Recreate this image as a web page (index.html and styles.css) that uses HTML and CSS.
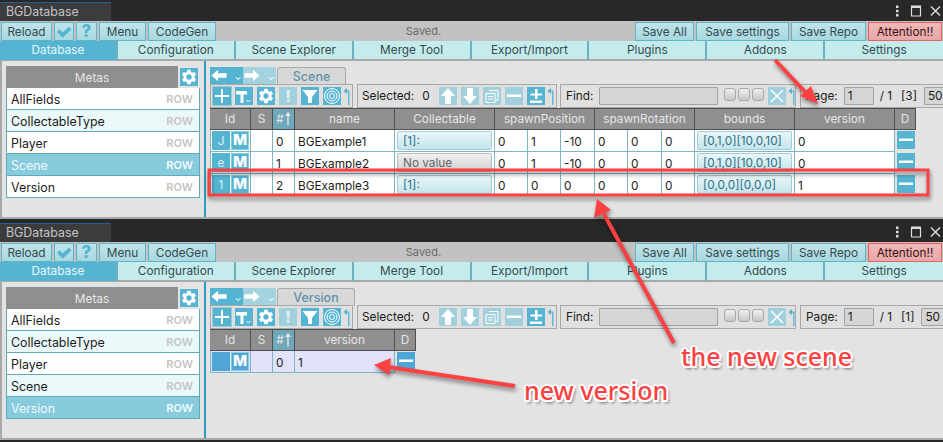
FILE: index.html
```html
<!DOCTYPE html>
<html lang="en">
<head>
  <meta charset="UTF-8">
  <title>BGDatabase</title>
  <link rel="stylesheet" href="styles.css">
</head>
<body>

  <!-- shared icons -->
  <svg class="defs" xmlns="http://www.w3.org/2000/svg">
    <symbol id="i-gear" viewBox="0 0 24 24"><path d="M19.14 12.94c.04-.3.06-.61.06-.94 0-.32-.02-.64-.07-.94l2.03-1.58a.49.49 0 0 0 .12-.61l-1.92-3.32a.488.488 0 0 0-.59-.22l-2.39.96c-.5-.38-1.03-.7-1.62-.94l-.36-2.54a.484.484 0 0 0-.48-.41h-3.84c-.24 0-.43.17-.47.41l-.36 2.54c-.59.24-1.13.57-1.62.94l-2.39-.96c-.22-.08-.47 0-.59.22L2.74 8.87c-.12.21-.08.47.12.61l2.03 1.58c-.05.3-.09.63-.09.94s.02.64.07.94l-2.03 1.58a.49.49 0 0 0-.12.61l1.92 3.32c.12.22.37.29.59.22l2.39-.96c.5.38 1.03.7 1.62.94l.36 2.54c.05.24.24.41.48.41h3.84c.24 0 .44-.17.47-.41l.36-2.54c.59-.24 1.13-.56 1.62-.94l2.39.96c.22.08.47 0 .59-.22l1.92-3.32c.12-.22.07-.47-.12-.61l-2.01-1.58zM12 15.6c-1.98 0-3.6-1.62-3.6-3.6s1.62-3.6 3.6-3.6 3.6 1.62 3.6 3.6-1.62 3.6-3.6 3.6z"/></symbol>
    <symbol id="i-check" viewBox="0 0 18 18"><path d="M1 9l3-3 3.5 3.5L14.5 3l3 3L7.5 15.5z"/></symbol>
    <symbol id="i-left" viewBox="0 0 18 18"><path d="M1 9l7-6v3.5h9v5H8V15z"/></symbol>
    <symbol id="i-right" viewBox="0 0 18 18"><path d="M17 9l-7-6v3.5H1v5h9V15z"/></symbol>
    <symbol id="i-up" viewBox="0 0 18 18"><path d="M9 1l7 8h-4v8H6V9H2z"/></symbol>
    <symbol id="i-down" viewBox="0 0 18 18"><path d="M9 17l7-8h-4V1H6v8H2z"/></symbol>
    <symbol id="i-plus" viewBox="0 0 18 18"><path d="M8 2h2v14H8zM2 8h14v2H2z"/></symbol>
    <symbol id="i-tool" viewBox="0 0 18 18"><path d="M1 4h11v3.500H8.500V16h-3V7.500H1z"/><path d="M11.500 13l2 2 2-2" fill="none" stroke="#fff"/></symbol>
    <symbol id="i-funnel" viewBox="0 0 18 18"><path d="M1.500 3h15l-5.500 7v6H7v-6z"/></symbol>
    <symbol id="i-target" viewBox="0 0 18 18"><g fill="none" stroke="#fff"><circle cx="9" cy="9" r="7.500"/><circle cx="9" cy="9" r="5"/><circle cx="9" cy="9" r="2.500"/></g></symbol>
    <symbol id="i-copy" viewBox="0 0 18 18"><g fill="none" stroke="#fff"><path d="M6 3.500h9v10H12"/><path d="M3 6.500h9v9H3zM5 9.500h5M5 12h5"/></g></symbol>
    <symbol id="i-minus" viewBox="0 0 18 18"><path d="M2 7.500h14v2.500H2z"/></symbol>
    <symbol id="i-plusminus" viewBox="0 0 18 18"><path d="M8 2h2.500v4.500H15V8.500h-4.500V12H8V8.500H3.500V6.500H8zM3 13.500h12V16H3z"/></symbol>
    <symbol id="i-x" viewBox="0 0 18 18"><path d="M3 3l12 12M15 3L3 15" fill="none" stroke="#fff" stroke-width="1.500"/></symbol>
    <symbol id="i-hook" viewBox="0 0 9 20"><path d="M6.500 20V4.500H4" fill="none" stroke="currentColor" stroke-width="1.500"/><path d="M4.500 1v7L0.500 4.500z" fill="currentColor"/></symbol>
    <symbol id="i-sort" viewBox="0 0 7 16"><path d="M3.500 0L7 5H4.300v11H2.700V5H0z"/></symbol>
    <symbol id="i-winbtns" viewBox="0 0 46 14"><path d="M0 1.500h2.500v2.500H0zM0 5.800h2.500v2.500H0zM0 10h2.500v2.500H0z"/><path d="M15.500 3h9v9h-9z" fill="none" stroke="#ddd" stroke-width="1.200"/><path d="M15 1.500h10v2.500H15z"/><path d="M35 2.500l9 9M44 2.500l-9 9" fill="none" stroke="#ddd" stroke-width="1.400"/></symbol>
  </svg>

  <!-- window with the Scene table -->
  <section class="window">
    <div class="titlebar">
      <div class="title-tab">BGDatabase</div>
      <svg class="win-btns"><use href="#i-winbtns"/></svg>
    </div>
    <div class="toolbar">
      <button class="btn w-reload">Reload</button>
      <button class="btn btn-icon"><svg><use href="#i-check"/></svg></button>
      <button class="btn btn-icon btn-q">?</button>
      <button class="btn w-menu">Menu</button>
      <button class="btn w-codegen">CodeGen</button>
      <div class="status">Saved.</div>
      <button class="btn w-saveall">Save All</button>
      <button class="btn w-settings">Save settings</button>
      <button class="btn w-repo">Save Repo</button>
      <button class="btn btn-alert w-attention">Attention!!</button>
    </div>
    <div class="tabs">
      <div class="tab active">Database</div>
      <div class="tab">Configuration</div>
      <div class="tab">Scene Explorer</div>
      <div class="tab">Merge Tool</div>
      <div class="tab">Export/Import</div>
      <div class="tab">Plugins</div>
      <div class="tab">Addons</div>
      <div class="tab">Settings</div>
    </div>
    <div class="panel">
      <div class="metas">
        <div class="metas-head">
          <div class="metas-title">Metas</div>
          <div class="ib"><svg><use href="#i-gear"/></svg></div>
        </div>
        <div class="meta-list">
          <div class="meta"><span>AllFields</span><b>ROW</b></div>
          <div class="meta alt"><span>CollectableType</span><b>ROW</b></div>
          <div class="meta"><span>Player</span><b>ROW</b></div>
          <div class="meta sel"><span>Scene</span><b>ROW</b></div>
          <div class="meta"><span>Version</span><b>ROW</b></div>
        </div>
      </div>
      <div class="main">
        <div class="nav">
          <div class="nav-btn"><svg><use href="#i-left"/></svg></div><div class="nav-drop">⌄</div>
          <div class="nav-btn off"><svg><use href="#i-right"/></svg></div><div class="nav-drop off">⌄</div>
          <div class="meta-tab w-scene">Scene</div>
        </div>
        <div class="groups">
          <div class="group g-tools">
            <div class="ib on"><svg><use href="#i-plus"/></svg></div>
            <div class="ib"><svg><use href="#i-tool"/></svg></div>
            <div class="ib"><svg><use href="#i-gear"/></svg></div>
            <div class="ib off bang">!</div>
            <div class="ib"><svg><use href="#i-funnel"/></svg></div>
            <div class="ib"><svg><use href="#i-target"/></svg></div>
            <svg class="hook"><use href="#i-hook"/></svg>
          </div>
          <div class="group g-sel">
            <span class="lbl">Selected:</span><span class="lbl count">0</span>
            <div class="ib off"><svg><use href="#i-up"/></svg></div>
            <div class="ib off"><svg><use href="#i-down"/></svg></div>
            <div class="ib off"><svg><use href="#i-copy"/></svg></div>
            <div class="ib off"><svg><use href="#i-minus"/></svg></div>
            <div class="ib"><svg><use href="#i-plusminus"/></svg></div>
            <svg class="hook"><use href="#i-hook"/></svg>
          </div>
          <div class="group g-find">
            <span class="lbl">Find:</span>
            <div class="input w-find"></div>
            <div class="toggles"><i></i><i></i><i></i></div>
            <div class="ib off"><svg><use href="#i-x"/></svg></div>
            <svg class="hook"><use href="#i-hook"/></svg>
          </div>
          <div class="group g-page">
            <span class="lbl">Page:</span>
            <div class="input w-page">1</div>
            <span class="lbl">/ 1</span><span class="lbl pages">[3]</span>
            <div class="input w-size">50</div>
          </div>
        </div>
        <div class="table scene-table">
          <div class="th">Id</div><div class="th">S</div><div class="th sorted">#<svg class="sort"><use href="#i-sort"/></svg></div><div class="th">name</div><div class="th">Collectable</div><div class="th span3">spawnPosition</div><div class="th span3">spawnRotation</div><div class="th">bounds</div><div class="th">version</div><div class="th">D</div>

          <div class="td id"><span class="hash">J</span><span class="m">M</span></div><div class="td"></div><div class="td">0</div><div class="td">BGExample1</div><div class="td pad"><div class="ref">[1]:</div></div><div class="td">0</div><div class="td">1</div><div class="td">-10</div><div class="td">0</div><div class="td">0</div><div class="td">0</div><div class="td pad"><div class="ref">[0,1,0][10,0,10]</div></div><div class="td">0</div><div class="td del"><div class="ib"><svg><use href="#i-minus"/></svg></div></div>

          <div class="td id"><span class="hash">e</span><span class="m">M</span></div><div class="td"></div><div class="td">1</div><div class="td">BGExample2</div><div class="td pad"><div class="ref none">No value</div></div><div class="td">0</div><div class="td">1</div><div class="td">-10</div><div class="td">0</div><div class="td">0</div><div class="td">0</div><div class="td pad"><div class="ref">[0,1,0][10,0,10]</div></div><div class="td">0</div><div class="td del"><div class="ib"><svg><use href="#i-minus"/></svg></div></div>

          <div class="td id"><span class="hash">1</span><span class="m">M</span></div><div class="td"></div><div class="td">2</div><div class="td">BGExample3</div><div class="td pad"><div class="ref">[1]:</div></div><div class="td">0</div><div class="td">0</div><div class="td">0</div><div class="td">0</div><div class="td">0</div><div class="td">0</div><div class="td pad"><div class="ref">[0,0,0][0,0,0]</div></div><div class="td">1</div><div class="td del"><div class="ib"><svg><use href="#i-minus"/></svg></div></div>
        </div>
      </div>
    </div>
  </section>

  <!-- window with the Version table -->
  <section class="window">
    <div class="titlebar">
      <div class="title-tab">BGDatabase</div>
      <svg class="win-btns"><use href="#i-winbtns"/></svg>
    </div>
    <div class="toolbar">
      <button class="btn w-reload">Reload</button>
      <button class="btn btn-icon"><svg><use href="#i-check"/></svg></button>
      <button class="btn btn-icon btn-q">?</button>
      <button class="btn w-menu">Menu</button>
      <button class="btn w-codegen">CodeGen</button>
      <div class="status">Saved.</div>
      <button class="btn w-saveall">Save All</button>
      <button class="btn w-settings">Save settings</button>
      <button class="btn w-repo">Save Repo</button>
      <button class="btn btn-alert w-attention">Attention!!</button>
    </div>
    <div class="tabs">
      <div class="tab active">Database</div>
      <div class="tab">Configuration</div>
      <div class="tab">Scene Explorer</div>
      <div class="tab">Merge Tool</div>
      <div class="tab">Export/Import</div>
      <div class="tab">Plugins</div>
      <div class="tab">Addons</div>
      <div class="tab">Settings</div>
    </div>
    <div class="panel">
      <div class="metas">
        <div class="metas-head">
          <div class="metas-title">Metas</div>
          <div class="ib"><svg><use href="#i-gear"/></svg></div>
        </div>
        <div class="meta-list">
          <div class="meta"><span>AllFields</span><b>ROW</b></div>
          <div class="meta alt"><span>CollectableType</span><b>ROW</b></div>
          <div class="meta"><span>Player</span><b>ROW</b></div>
          <div class="meta alt"><span>Scene</span><b>ROW</b></div>
          <div class="meta sel"><span>Version</span><b>ROW</b></div>
        </div>
      </div>
      <div class="main">
        <div class="nav">
          <div class="nav-btn"><svg><use href="#i-left"/></svg></div><div class="nav-drop">⌄</div>
          <div class="nav-btn off"><svg><use href="#i-right"/></svg></div><div class="nav-drop off">⌄</div>
          <div class="meta-tab w-version">Version</div>
        </div>
        <div class="groups">
          <div class="group g-tools">
            <div class="ib on"><svg><use href="#i-plus"/></svg></div>
            <div class="ib"><svg><use href="#i-tool"/></svg></div>
            <div class="ib"><svg><use href="#i-gear"/></svg></div>
            <div class="ib off bang">!</div>
            <div class="ib"><svg><use href="#i-funnel"/></svg></div>
            <div class="ib"><svg><use href="#i-target"/></svg></div>
            <svg class="hook"><use href="#i-hook"/></svg>
          </div>
          <div class="group g-sel">
            <span class="lbl">Selected:</span><span class="lbl count">0</span>
            <div class="ib off"><svg><use href="#i-up"/></svg></div>
            <div class="ib off"><svg><use href="#i-down"/></svg></div>
            <div class="ib off"><svg><use href="#i-copy"/></svg></div>
            <div class="ib off"><svg><use href="#i-minus"/></svg></div>
            <div class="ib"><svg><use href="#i-plusminus"/></svg></div>
            <svg class="hook"><use href="#i-hook"/></svg>
          </div>
          <div class="group g-find">
            <span class="lbl">Find:</span>
            <div class="input w-find"></div>
            <div class="toggles"><i></i><i></i><i></i></div>
            <div class="ib off"><svg><use href="#i-x"/></svg></div>
            <svg class="hook"><use href="#i-hook"/></svg>
          </div>
          <div class="group g-page">
            <span class="lbl">Page:</span>
            <div class="input w-page">1</div>
            <span class="lbl">/ 1</span><span class="lbl pages">[1]</span>
            <div class="input w-size">50</div>
          </div>
        </div>
        <div class="table version-table">
          <div class="th">Id</div><div class="th">S</div><div class="th sorted">#<svg class="sort"><use href="#i-sort"/></svg></div><div class="th">version</div><div class="th">D</div>

          <div class="td id lav"><span class="hash deep"></span><span class="m deep">M</span></div><div class="td lav"></div><div class="td lav">0</div><div class="td lav">1</div><div class="td del lav"><div class="ib deep"><svg><use href="#i-minus"/></svg></div></div>
        </div>
      </div>
    </div>
  </section>

  <!-- red annotations drawn over both windows -->
  <svg class="notes" xmlns="http://www.w3.org/2000/svg" viewBox="0 0 943 442">
    <rect x="209" y="170" width="719" height="25" fill="none" stroke="#fb4141" stroke-width="3"/>
    <path d="M775 60L808 95" stroke="#fb4141" stroke-width="4" fill="none"/>
    <path d="M818 104L800 96 811 86z" fill="#fb4141"/>
    <path d="M674 343L604 214" stroke="#fb4141" stroke-width="4" fill="none"/>
    <path d="M597 199L594 218 611 210z" fill="#fb4141"/>
    <path d="M515 386L388 367" stroke="#fb4141" stroke-width="4" fill="none"/>
    <path d="M374 365L391 358 389 375z" fill="#fb4141"/>
  </svg>
  <div class="note note-scene">the new scene</div>
  <div class="note note-version">new version</div>

</body>
</html>
```

FILE: styles.css
```css
* {
  box-sizing: border-box;
}

body {
  margin: 0;
  width: 943px;
  height: 442px;
  overflow: hidden;
  position: relative;
  background: #282828;
  font-family: Inter, "Liberation Sans", sans-serif;
  font-size: 11.800px;
  color: #1c1c1c;
}

.defs {
  position: absolute;
  width: 0;
  height: 0;
}

.window {
  height: 221px;
}

/* title strip */
.titlebar {
  height: 21px;
  display: flex;
  justify-content: space-between;
  align-items: flex-end;
  background: #282828;
}

.title-tab {
  width: 111px;
  height: 19px;
  padding-left: 6px;
  background: #3c3c3c;
  border-top: 1px solid #2c5d8f;
  color: #c4c4c4;
  font-size: 12.400px;
  line-height: 18px;
}

.win-btns {
  width: 46px;
  height: 14px;
  margin: 0 1px 3px 0;
  fill: #ddd;
}

/* top toolbar */
.toolbar {
  height: 20px;
  padding: 1px 1px 0;
  display: flex;
  gap: 2px;
  background: #c2c2c2;
}

.btn {
  height: 19px;
  padding: 0;
  background: linear-gradient(#bfe4ea, #a8d8e0);
  border: 1px solid #62b3c6;
  font: inherit;
  color: #35494e;
}

.w-reload { width: 51px; }
.w-menu { width: 47px; }
.w-codegen { width: 68px; }
.w-saveall { width: 59px; }
.w-settings { width: 93px; }
.w-repo { width: 75px; }
.w-attention { width: 74px; }

.btn-icon {
  width: 20px;
  color: #56b4d3;
}

.btn-icon svg {
  width: 16px;
  height: 16px;
  display: block;
  margin: 0 auto;
  fill: #56b4d3;
}

.btn-q {
  width: 21px;
  font-size: 17px;
  font-weight: 800;
  line-height: 15px;
}

.btn-alert {
  background: linear-gradient(#f0b8b8, #e6a9a9);
  border-color: #ec5f5f;
  color: #3a1010;
}

.status {
  flex: 1;
  padding-right: 4px;
  text-align: center;
  line-height: 19px;
  font-size: 11px;
  color: #6a6a6a;
}

/* main tabs */
.tabs {
  height: 20px;
  display: grid;
  grid-template-columns: repeat(8, 1fr);
  background: #c5ecec;
  border-bottom: 2px solid #a9a9a9;
}

.tab {
  border-right: 2px solid #6fb0c0;
  text-align: center;
  line-height: 19px;
  color: #35494e;
}

.tab:last-child {
  border-right: none;
}

.tab.active {
  background: #56b4d3;
  color: #e8f8fb;
}

/* body of the window */
.panel {
  height: 158px;
  display: flex;
  background: #e3e3e3;
  border-left: 2px solid #a8a8a8;
  border-bottom: 2px solid #a8a8a8;
}

.metas {
  width: 204px;
  padding: 5px 4px 0;
  flex: none;
  border-right: 2px solid #2a9dc0;
}

.metas-head {
  height: 22px;
  display: flex;
  gap: 2px;
  align-items: center;
}

.metas-title {
  width: 172px;
  height: 22px;
  background: #8f8f8f;
  color: #e6e6e6;
  text-align: center;
  line-height: 24px;
}

.meta-list {
  width: 194px;
  border-left: 1px solid #62a9ba;
  border-right: 1px solid #62a9ba;
  border-bottom: 1px solid #62a9ba;
}

.meta {
  height: 22px;
  padding: 0 6px 0 4px;
  display: flex;
  justify-content: space-between;
  align-items: center;
  background: #fff;
  border-bottom: 1px solid #62a9ba;
  color: #1c1c1c;
}

.meta:last-child {
  border-bottom: none;
  height: 21px;
}

.meta span {
  padding-top: 2px;
  font-size: 12.400px;
}

.meta b {
  font-weight: 600;
  font-size: 11px;
  color: #c4c4c4;
}

.meta.alt {
  background: #ebf8f9;
}

.meta.sel {
  background: #87cbdc;
  color: #eefafc;
}

.meta.sel b {
  color: #f2fbfd;
}

.main {
  flex: 1;
  padding: 6px 0 0 4px;
  overflow: hidden;
}

/* back / forward row */
.nav {
  height: 17px;
  display: flex;
}

.nav-btn {
  width: 23px;
  height: 17px;
  background: #56b4d3;
}

.nav-btn svg {
  width: 18px;
  height: 17px;
  display: block;
  fill: #fff;
}

.nav-drop {
  width: 10px;
  height: 17px;
  background: #56b4d3;
  color: #fff;
  font-size: 9px;
  line-height: 19px;
  text-align: center;
}

.nav-btn.off,
.nav-drop.off {
  background: #a2d3df;
}

.meta-tab {
  margin-left: 1px;
  height: 18px;
  background: #d8d8d8;
  border: 1px solid #a8a8a8;
  border-bottom: none;
  border-radius: 3px 3px 0 0;
  color: #5f93a8;
  font-size: 12.500px;
  font-weight: 500;
  text-align: center;
  line-height: 17px;
}

.w-scene { width: 69px; }
.w-version { width: 78px; }

/* tool groups */
.groups {
  height: 24px;
  display: flex;
}

.group {
  height: 24px;
  padding: 0 1px 0 2px;
  display: flex;
  align-items: center;
  gap: 4px;
  background: #e0e0e0;
  border: 1px solid #a8a8a8;
  flex: none;
}

.g-tools { width: 143px; }
.g-sel { width: 200px; margin-left: 4px; padding-left: 4px; }
.g-find { width: 236px; margin-left: 3px; padding-left: 5px; }
.g-page { width: 160px; margin-left: 4px; padding-left: 5px; gap: 6px; }

.lbl {
  white-space: nowrap;
  flex: none;
}

.count {
  width: 8px;
  margin: 0 5px 0 4px;
}

.pages {
  margin-left: 3px;
}

.ib {
  width: 18px;
  height: 18px;
  flex: none;
  background: #56b4d3;
  text-align: center;
}

.ib svg {
  width: 18px;
  height: 18px;
  display: block;
  fill: #fff;
}

.ib.off {
  background: #a0d0dc;
}

.ib.on {
  outline: 1px solid #9ec9d4;
}

.ib.bang {
  color: #e0eef1;
  font-size: 16px;
  font-weight: 800;
  line-height: 18px;
}

.ib.deep {
  background: #4fa5d6;
}

.hook {
  width: 8px;
  height: 20px;
  flex: none;
  margin-left: -2px;
  color: #56b4d3;
}

.input {
  height: 18px;
  flex: none;
  padding-left: 3px;
  background: #d5d5d5;
  border: 1px solid #a2a2a2;
  line-height: 16px;
  border-radius: 1px;
}

.w-find { width: 119px; margin-left: 2px; }
.w-page { width: 30px; }
.w-size { width: 30px; margin-left: 1px; }

.toggles {
  display: flex;
  gap: 2px;
  margin: 0 0 3px 2px;
}

.toggles i {
  width: 12px;
  height: 13px;
  background: linear-gradient(#f0f0f0, #c6c6c6);
  border: 1px solid #a8a8a8;
  border-radius: 3px;
}

/* data table */
.table {
  display: grid;
  grid-auto-rows: 22px;
  color: #1c1c1c;
}

.scene-table {
  width: 706px;
  grid-template-columns: 41px 22px 22px 100px 100px 33px 33px 34px 33px 34px 33px 100px 100px 21px;
}

.version-table {
  width: 206px;
  grid-template-columns: 41px 22px 22px 100px 21px;
}

.th {
  background: #8f8f8f;
  border-right: 1px solid #4f4f4f;
  border-top: 1px solid #4f4f4f;
  border-bottom: 1px solid #4f4f4f;
  color: #e6e6e6;
  text-align: center;
  line-height: 20px;
  white-space: nowrap;
}

.th:last-of-type {
  border-right: none;
}

.th.span3 {
  grid-column: span 3;
}

.th.sorted {
  background: #6fa8ba;
}

.sort {
  width: 6px;
  height: 15px;
  margin-left: 1px;
  vertical-align: -3px;
  fill: #e6e6e6;
}

.td {
  padding: 0 3px;
  background: #fff;
  border-right: 1px solid #7fb6c4;
  border-bottom: 1px solid #7fb6c4;
  line-height: 24px;
}

.td.id {
  padding: 1px;
  display: flex;
  gap: 1px;
  border-left: 1px solid #7fb6c4;
}

.td.pad {
  padding: 1px 2px;
}

.td.del {
  padding: 1px 2px;
  background: none;
  border: none;
}

.td.lav {
  background: #e2e2fa;
}

.td.del.lav {
  background: none;
}

.hash,
.m {
  width: 18px;
  height: 19px;
  background: #56b4d3;
  text-align: center;
}

.hash {
  color: #d7eff6;
  line-height: 21px;
}

.m {
  border: 1px solid #86cfe3;
  color: #fff;
  font-size: 15px;
  font-weight: 800;
  line-height: 16px;
}

.hash.deep,
.m.deep {
  background: #4fa5d6;
}

.ref {
  height: 19px;
  padding-left: 5px;
  background: linear-gradient(#e9f7f9, #c4e5ec);
  border: 1px solid #a6cdd7;
  border-radius: 2px;
  color: #2f6f86;
  line-height: 19px;
  white-space: nowrap;
}

.ref.none {
  background: linear-gradient(#efefef, #d2d2d2);
  border-color: #bbb;
  color: #666;
}

/* annotations */
.notes {
  position: absolute;
  top: 0;
  left: 0;
  width: 943px;
  height: 442px;
  filter: drop-shadow(1px 3px 2px rgba(0, 0, 0, 0.45));
  pointer-events: none;
}

.note {
  position: absolute;
  font-family: "Noto Sans", sans-serif;
  font-size: 25px;
  font-weight: 500;
  line-height: 30px;
  color: #fb4141;
  white-space: nowrap;
  text-shadow: -2px 0 0 #fff, 2px 0 0 #fff, 0 -2px 0 #fff, 0 2px 0 #fff, -1.500px -1.500px 0 #fff, 1.500px -1.500px 0 #fff, -1.500px 1.500px 0 #fff, 1.500px 1.500px 0 #fff, 2px 3px 3px rgba(0, 0, 0, 0.6);
}

.note-scene {
  left: 681px;
  top: 341px;
}

.note-version {
  left: 524px;
  top: 375px;
}
```
